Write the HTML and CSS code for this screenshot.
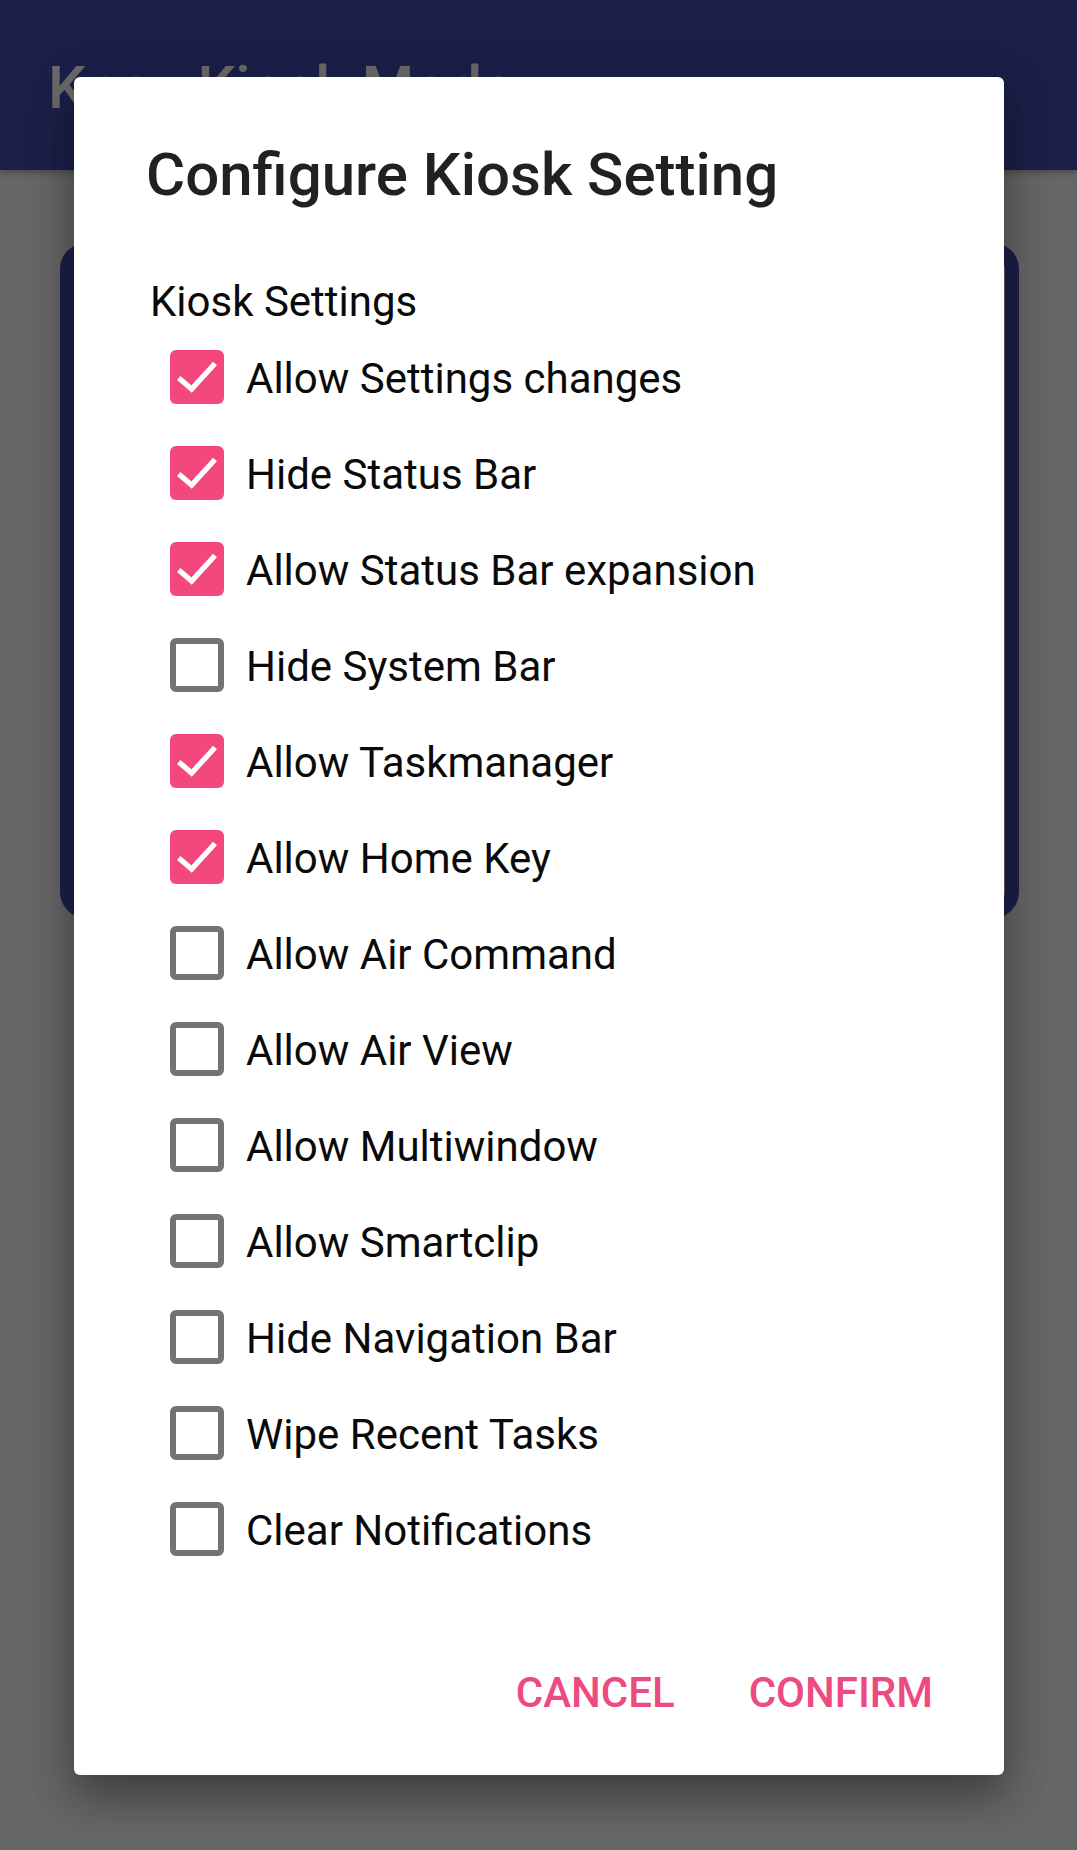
FILE: index.html
```html
<!DOCTYPE html>
<html lang="en">
<head>
<meta charset="utf-8">
<title>Configure Kiosk Setting</title>
<link rel="stylesheet" href="styles.css">
</head>
<body>
<div class="app">
  <header class="toolbar"><span class="toolbar-title">Knox Kiosk Mode</span></header>
  <main class="content">
    <div class="card"></div>
  </main>
</div>

<div class="dialog" role="dialog">
  <h1 class="dialog-title">Configure Kiosk Setting</h1>
  <div class="section-label">Kiosk Settings</div>
  <ul class="options">
    <li class="option"><span class="cb checked"><svg viewBox="0 0 18 18"><polyline points="2.9,9.3 7.2,13 15,4.5"/></svg></span><span class="opt-text">Allow Settings changes</span></li>
    <li class="option"><span class="cb checked"><svg viewBox="0 0 18 18"><polyline points="2.9,9.3 7.2,13 15,4.5"/></svg></span><span class="opt-text">Hide Status Bar</span></li>
    <li class="option"><span class="cb checked"><svg viewBox="0 0 18 18"><polyline points="2.9,9.3 7.2,13 15,4.5"/></svg></span><span class="opt-text">Allow Status Bar expansion</span></li>
    <li class="option"><span class="cb"></span><span class="opt-text">Hide System Bar</span></li>
    <li class="option"><span class="cb checked"><svg viewBox="0 0 18 18"><polyline points="2.9,9.3 7.2,13 15,4.5"/></svg></span><span class="opt-text">Allow Taskmanager</span></li>
    <li class="option"><span class="cb checked"><svg viewBox="0 0 18 18"><polyline points="2.9,9.3 7.2,13 15,4.5"/></svg></span><span class="opt-text">Allow Home Key</span></li>
    <li class="option"><span class="cb"></span><span class="opt-text">Allow Air Command</span></li>
    <li class="option"><span class="cb"></span><span class="opt-text">Allow Air View</span></li>
    <li class="option"><span class="cb"></span><span class="opt-text">Allow Multiwindow</span></li>
    <li class="option"><span class="cb"></span><span class="opt-text">Allow Smartclip</span></li>
    <li class="option"><span class="cb"></span><span class="opt-text">Hide Navigation Bar</span></li>
    <li class="option"><span class="cb"></span><span class="opt-text">Wipe Recent Tasks</span></li>
    <li class="option"><span class="cb"></span><span class="opt-text">Clear Notifications</span></li>
  </ul>
  <div class="actions">
    <button class="btn">CANCEL</button>
    <button class="btn">CONFIRM</button>
  </div>
</div>
</body>
</html>
```

FILE: styles.css
```css
* { box-sizing: border-box; }

html, body {
  margin: 0;
  padding: 0;
}

body {
  width: 1077px;
  height: 1850px;
  overflow: hidden;
  background: #666666;
  font-family: Roboto, "Noto Sans", "Liberation Sans", sans-serif;
  position: relative;
}

.app {
  display: flex;
  flex-direction: column;
  height: 100%;
}

.toolbar {
  height: 170px;
  background: #1b2049;
  padding: 48px 0 0 48px;
  box-shadow: 0 3px 6px rgba(0,0,0,0.25);
}

.toolbar-title {
  font-size: 60px;
  line-height: 80px;
  font-weight: 500;
  color: #6a6a6a;
}

.content {
  padding: 73px 58px 0 60px;
}

.card {
  height: 675px;
  border: 14px solid #1b2049;
  border-radius: 26px;
}

.dialog {
  position: absolute;
  left: 74px;
  top: 77px;
  width: 930px;
  height: 1698px;
  background: #ffffff;
  border-radius: 6px;
  padding: 58px 0 0 72px;
  box-shadow: 0 24px 40px rgba(0,0,0,0.28), 0 10px 50px rgba(0,0,0,0.18);
}

.dialog-title {
  margin: 0;
  font-size: 60px;
  line-height: 80px;
  font-weight: 500;
  color: #212121;
}

.section-label {
  margin-top: 60px;
  padding-left: 4px;
  font-size: 42px;
  line-height: 54px;
  color: #0a0a0a;
}

.options {
  list-style: none;
  margin: 0;
  padding: 0 0 0 24px;
}

.option {
  display: flex;
  align-items: center;
  height: 96px;
  gap: 22px;
}

.cb {
  width: 54px;
  height: 54px;
  flex: none;
  border: 6px solid #737373;
  border-radius: 6px;
  display: flex;
}

.cb.checked {
  border: none;
  background: #f2487e;
}

.cb svg {
  width: 54px;
  height: 54px;
}

.cb polyline {
  fill: none;
  stroke: #ffffff;
  stroke-width: 1.75;
  stroke-linecap: butt;
  stroke-linejoin: miter;
}

.opt-text {
  font-size: 42px;
  line-height: 96px;
  color: #0a0a0a;
  position: relative;
  top: 2px;
}

.actions {
  display: flex;
  justify-content: flex-end;
  gap: 26px;
  margin-top: 68px;
  padding-right: 47px;
}

.btn {
  background: none;
  border: none;
  padding: 0 24px;
  font-family: Roboto, "Noto Sans", "Liberation Sans", sans-serif;
  font-size: 42px;
  line-height: 96px;
  font-weight: 500;
  color: #ec4a80;
}
```
